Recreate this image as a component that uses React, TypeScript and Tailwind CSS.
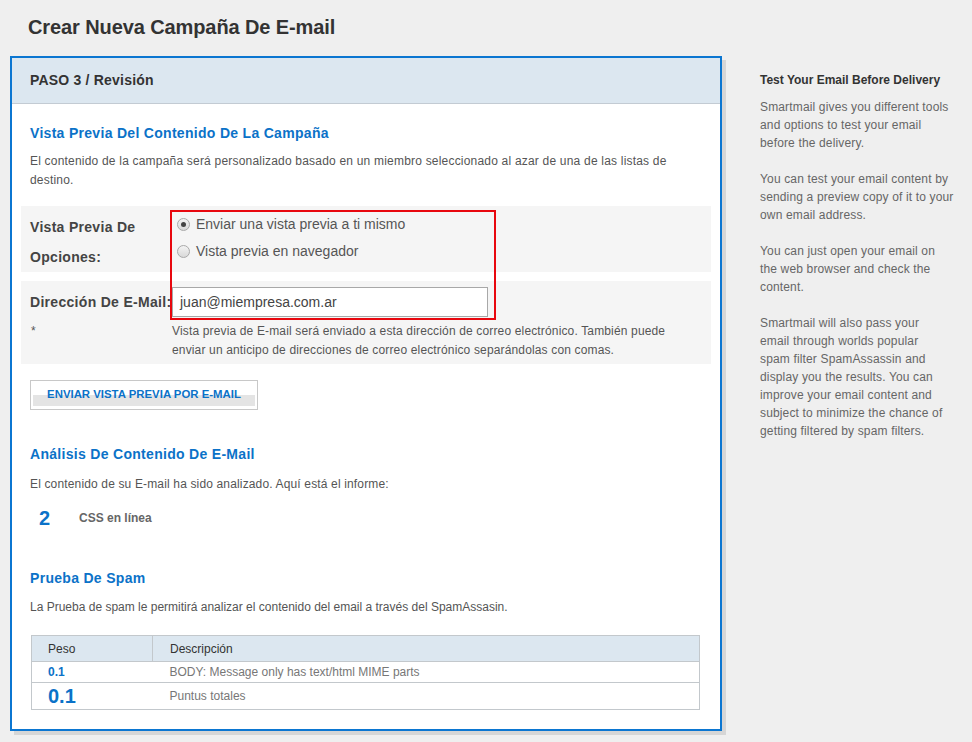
import React from "react";

function Radio({ checked }: { checked?: boolean }) {
  return (
    <span className="relative inline-flex h-[13px] w-[13px] shrink-0 items-center justify-center rounded-full border border-[#a9a9a9] bg-[linear-gradient(to_bottom,#f3f3f3,#d9d9d9)]">
      {checked && <span className="h-[5px] w-[5px] rounded-full bg-[#444]" />}
    </span>
  );
}

export default function App() {
  return (
    <div className="min-h-[742px] w-[972px] bg-[#efefef] font-['Liberation_Sans',Arial,sans-serif] text-[#555]">
      <h1 className="h-[56px] pl-[28px] pt-[14px] text-[20px] font-bold leading-[26px] tracking-[-0.1px] text-[#333]">
        Crear Nueva Campaña De E-mail
      </h1>
      <div className="flex">
        <div className="ml-[10px] w-[712px] shrink-0">
          <div className="border-2 border-[#0b76d1] bg-white shadow-[4px_4px_0_#d6d6d6]">
            <div className="flex h-[46px] items-center border-b border-[#c3cbd3] bg-[#dce7f0] pl-[18px] text-[14px] font-bold tracking-[0.2px] text-[#333]">
              PASO 3 / Revisión
            </div>
            <div className="px-[18px] pb-[19px]">
              <h2 className="mt-[20px] text-[14px] font-bold leading-[18px] tracking-[0.3px] text-[#0b72c8]">
                Vista Previa Del Contenido De La Campaña
              </h2>
              <p className="mt-[10px] text-[12px] leading-[19px] tracking-[0.2px] text-[#555]">
                El contenido de la campaña será personalizado basado en un miembro seleccionado al azar de una de las listas de destino.
              </p>

              <div className="relative mt-[16px]">
                <div className="-mx-[9px] flex h-[66px] bg-[#f5f5f5] px-[9px] pt-[6px]">
                  <div className="w-[142px] text-[14px] font-bold leading-[30px] tracking-[0.3px] text-[#444]">
                    Vista Previa De
                    <br />
                    Opciones:
                  </div>
                  <div className="flex flex-col pl-[5px] pt-[3px] text-[14px] text-[#555]">
                    <label className="flex h-[18px] items-center gap-[6px]">
                      <Radio checked />
                      <span>Enviar una vista previa a ti mismo</span>
                    </label>
                    <label className="mt-[9px] flex h-[18px] items-center gap-[6px]">
                      <Radio />
                      <span>Vista previa en navegador</span>
                    </label>
                  </div>
                </div>

                <div className="-mx-[9px] mt-[9px] bg-[#f5f5f5] px-[9px] pb-[4px] pt-[6px]">
                  <div className="flex items-center">
                    <div className="w-[142px] whitespace-nowrap text-[14px] font-bold leading-[30px] tracking-[0.3px] text-[#444]">
                      Dirección De E-Mail:
                    </div>
                    <div className="relative flex h-[30px] w-[316px] items-center border border-[#a8a8a8] bg-white pl-[7px] text-[14px] text-[#444]">
                      juan@miempresa.com.ar
                    </div>
                  </div>
                  <div className="mt-[5px] flex">
                    <div className="w-[142px] pl-[1px] text-[12px] leading-[19px] text-[#555]">*</div>
                    <p className="w-[510px] text-[12px] leading-[19px] tracking-[0.15px] text-[#555]">
                      Vista previa de E-mail será enviado a esta dirección de correo electrónico. También puede enviar un anticipo de direcciones de correo electrónico separándolas con comas.
                    </p>
                  </div>
                </div>

                <div className="pointer-events-none absolute left-[140px] top-[4px] h-[110px] w-[326px] border-2 border-[#e8070e]" />
              </div>

              <button className="mt-[16px] block h-[30px] w-[228px] border border-[#c8c8c8] bg-white p-[2px]">
                <div className="flex h-full w-full items-center justify-center bg-[linear-gradient(to_bottom,#fff_0,#fff_12px,#e4e4e4_12px,#e4e4e4_23px,#fff_23px)] text-[11.4px] font-bold text-[#0b72c8]">
                  ENVIAR VISTA PREVIA POR E-MAIL
                </div>
              </button>

              <h2 className="mt-[35px] text-[14px] font-bold leading-[18px] tracking-[0.3px] text-[#0b72c8]">
                Análisis De Contenido De E-Mail
              </h2>
              <p className="mt-[12px] text-[12px] leading-[19px] tracking-[0.15px] text-[#555]">
                El contenido de su E-mail ha sido analizado. Aquí está el informe:
              </p>
              <div className="mt-[12px] flex h-[24px] items-center">
                <span className="w-[49px] pl-[9px] text-[20px] font-bold text-[#0b72c8]">2</span>
                <span className="text-[12px] font-bold text-[#666]">CSS en línea</span>
              </div>

              <h2 className="mt-[39px] text-[14px] font-bold leading-[18px] tracking-[0.3px] text-[#0b72c8]">
                Prueba De Spam
              </h2>
              <p className="mt-[11px] text-[12px] leading-[19px] text-[#555]">
                La Prueba de spam le permitirá analizar el contenido del email a través del SpamAssasin.
              </p>

              <table className="ml-[1px] mt-[18px] w-[669px] border-collapse border border-[#c3c8cc] text-[12px]">
                <thead>
                  <tr className="h-[26px] bg-[#dce7f0] text-left text-[#333]">
                    <th className="w-[121px] border border-[#c3c8cc] pl-[16px] font-normal">Peso</th>
                    <th className="border border-[#c3c8cc] pl-[17px] font-normal">Descripción</th>
                  </tr>
                </thead>
                <tbody>
                  <tr className="h-[21px] border-b border-[#c3c8cc]">
                    <td className="pl-[16px] font-bold text-[#0b72c8]">0.1</td>
                    <td className="pl-[17px] text-[#777]">BODY: Message only has text/html MIME parts</td>
                  </tr>
                  <tr className="h-[27px]">
                    <td className="pl-[16px] text-[20px] font-bold leading-[24px] text-[#0b72c8]">0.1</td>
                    <td className="pl-[17px] text-[#777]">Puntus totales</td>
                  </tr>
                </tbody>
              </table>
            </div>
          </div>
        </div>

        <aside className="ml-[38px] w-[200px] whitespace-nowrap pt-[15px] text-[12px] leading-[18px] tracking-[0.15px] text-[#666]">
          <h3 className="font-bold tracking-normal text-[#333]">Test Your Email Before Delivery</h3>
          <p className="mt-[9px]">
            Smartmail gives you different tools
            <br />
            and options to test your email
            <br />
            before the delivery.
          </p>
          <p className="mt-[18px]">
            You can test your email content by
            <br />
            sending a preview copy of it to your
            <br />
            own email address.
          </p>
          <p className="mt-[18px]">
            You can just open your email on
            <br />
            the web browser and check the
            <br />
            content.
          </p>
          <p className="mt-[18px]">
            Smartmail will also pass your
            <br />
            email through worlds popular
            <br />
            spam filter SpamAssassin and
            <br />
            display you the results. You can
            <br />
            improve your email content and
            <br />
            subject to minimize the chance of
            <br />
            getting filtered by spam filters.
          </p>
        </aside>
      </div>
    </div>
  );
}
